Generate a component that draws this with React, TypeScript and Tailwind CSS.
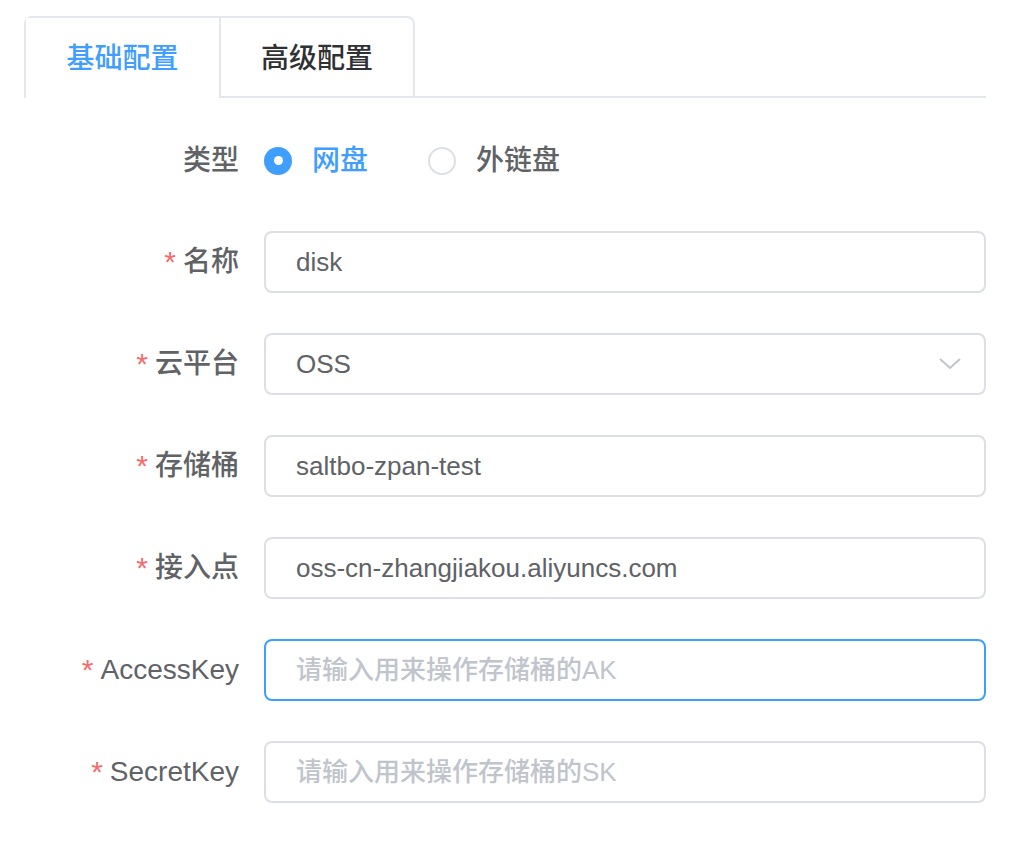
import React from "react";

const font = { fontFamily: '"Liberation Sans", "Noto Sans CJK SC", sans-serif' };

function Label({ text, required }: { text: string; required?: boolean }) {
  return (
    <div className="w-[240px] shrink-0 pr-[25px] flex justify-end items-center text-[28px] text-[#606266] leading-none font-medium">
      {required && <span className="text-[#f56c6c] mr-[7px] text-[30px]">*</span>}
      <span>{text}</span>
    </div>
  );
}

function Input({ value, placeholder, focused, select }: { value?: string; placeholder?: string; focused?: boolean; select?: boolean }) {
  return (
    <div
      className={`flex-1 h-[62px] rounded-[8px] border-2 flex items-center pl-[30px] pr-[22px] text-[26px] font-medium ${
        focused ? "border-[#409eff]" : "border-[#dcdfe6]"
      }`}
    >
      <span className={`flex-1 ${value ? "text-[#606266]" : "text-[#c0c4cc]"}`}>{value || placeholder}</span>
      {select && (
        <svg width="24" height="14" viewBox="0 0 24 14" fill="none">
          <path d="M2 2 L12 11 L22 2" stroke="#c0c4cc" strokeWidth="2" />
        </svg>
      )}
    </div>
  );
}

function Row({ label, required, children, h = "h-[62px]" }: { label: string; required?: boolean; children: React.ReactNode; h?: string }) {
  return (
    <div className={`flex items-center ${h}`}>
      <Label text={label} required={required} />
      {children}
    </div>
  );
}

export default function App() {
  return (
    <div className="w-[1022px] h-[854px] bg-white pt-[16px] pl-[24px]" style={font}>
      <div className="w-[962px]">
        <div className="flex border-b-2 border-[#e4e7ed] h-[82px]">
          <div className="flex border-2 border-b-0 border-[#e4e7ed] rounded-t-[8px] -mb-[2px]">
            <div className="w-[193px] pt-[4px] flex items-center justify-center text-[28px] font-medium text-[#409eff] bg-white border-b-2 border-white">
              基础配置
            </div>
            <div className="w-[194px] pt-[4px] flex items-center justify-center text-[28px] font-medium text-[#303133] border-l-2 border-[#e4e7ed] border-b-2 border-b-[#e4e7ed]">
              高级配置
            </div>
          </div>
        </div>

        <div className="mt-[32px] flex flex-col gap-[40px]">
          <Row label="类型" h="h-[61px]">
            <div className="flex items-center text-[28px] font-medium">
              <span className="w-[28px] h-[28px] rounded-full bg-[#409eff] flex items-center justify-center">
                <span className="w-[9px] h-[9px] rounded-full bg-white" />
              </span>
              <span className="ml-[20px] text-[#409eff]">网盘</span>
              <span className="ml-[60px] w-[28px] h-[28px] rounded-full border-2 border-[#dcdfe6]" />
              <span className="ml-[20px] text-[#606266]">外链盘</span>
            </div>
          </Row>
          <Row label="名称" required>
            <Input value="disk" />
          </Row>
          <Row label="云平台" required>
            <Input value="OSS" select />
          </Row>
          <Row label="存储桶" required>
            <Input value="saltbo-zpan-test" />
          </Row>
          <Row label="接入点" required>
            <Input value="oss-cn-zhangjiakou.aliyuncs.com" />
          </Row>
          <Row label="AccessKey" required>
            <Input placeholder="请输入用来操作存储桶的AK" focused />
          </Row>
          <Row label="SecretKey" required>
            <Input placeholder="请输入用来操作存储桶的SK" />
          </Row>
        </div>
      </div>
    </div>
  );
}
